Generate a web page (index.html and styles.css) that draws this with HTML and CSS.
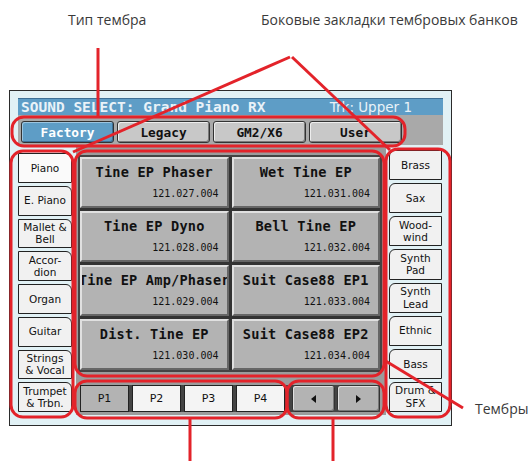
FILE: index.html
```html
<!DOCTYPE html>
<html>
<head>
    <meta charset="utf-8">
    <link rel="stylesheet" href="styles.css">
</head>
<body>
    <div class="page">
        <div class="note note-type">Тип тембра</div>
        <div class="note note-tabs">Боковые закладки тембровых банков</div>
        <div class="note note-sounds">Тембры</div>

        <div class="screen">
            <div class="titlebar">
                <span class="title">SOUND SELECT: Grand Piano RX</span>
                <span class="track">Trk: Upper 1</span>
            </div>
            <div class="banks">
                <div class="bank active">Factory</div>
                <div class="bank">Legacy</div>
                <div class="bank">GM2/X6</div>
                <div class="bank">User</div>
            </div>
            <div class="body">
                <div class="side side-left">
                    <div class="side-tab active">Piano</div>
                    <div class="side-tab">E. Piano</div>
                    <div class="side-tab">Mallet &amp;<br>Bell</div>
                    <div class="side-tab">Accor-<br>dion</div>
                    <div class="side-tab">Organ</div>
                    <div class="side-tab">Guitar</div>
                    <div class="side-tab">Strings<br>&amp; Vocal</div>
                    <div class="side-tab">Trumpet<br>&amp; Trbn.</div>
                </div>
                <div class="center">
                    <div class="grid">
                        <div class="cell"><div class="name">Tine EP Phaser</div><div class="num">121.027.004</div></div>
                        <div class="cell"><div class="name">Wet Tine EP</div><div class="num">121.031.004</div></div>
                        <div class="cell"><div class="name">Tine EP Dyno</div><div class="num">121.028.004</div></div>
                        <div class="cell"><div class="name">Bell Tine EP</div><div class="num">121.032.004</div></div>
                        <div class="cell"><div class="name">Tine EP Amp/Phaser</div><div class="num">121.029.004</div></div>
                        <div class="cell"><div class="name">Suit Case88 EP1</div><div class="num">121.033.004</div></div>
                        <div class="cell"><div class="name">Dist. Tine EP</div><div class="num">121.030.004</div></div>
                        <div class="cell"><div class="name">Suit Case88 EP2</div><div class="num">121.034.004</div></div>
                    </div>
                    <div class="pager">
                        <div class="page-btn active">P1</div>
                        <div class="page-btn">P2</div>
                        <div class="page-btn">P3</div>
                        <div class="page-btn">P4</div>
                        <div class="arrows">
                            <div class="arrow">
                                <svg width="5" height="8" viewBox="0 0 5 8"><path d="M5 0 L0 4 L5 8 Z" fill="#111"/></svg>
                            </div>
                            <div class="arrow">
                                <svg width="5" height="8" viewBox="0 0 5 8"><path d="M0 0 L5 4 L0 8 Z" fill="#111"/></svg>
                            </div>
                        </div>
                    </div>
                </div>
                <div class="side side-right">
                    <div class="side-tab">Brass</div>
                    <div class="side-tab">Sax</div>
                    <div class="side-tab">Wood-<br>wind</div>
                    <div class="side-tab">Synth<br>Pad</div>
                    <div class="side-tab">Synth<br>Lead</div>
                    <div class="side-tab">Ethnic</div>
                    <div class="side-tab">Bass</div>
                    <div class="side-tab">Drum &amp;<br>SFX</div>
                </div>
            </div>
        </div>

        <!-- red callouts over the screenshot -->
        <svg class="marks" width="529" height="463" viewBox="0 0 529 463">
            <g fill="none" stroke="#e3232a" stroke-width="3">
                <rect x="12" y="117" width="393" height="29" rx="12"/>
                <rect x="11" y="151" width="62" height="266" rx="12"/>
                <rect x="75" y="151" width="309" height="225" rx="12"/>
                <rect x="75" y="381" width="212" height="37" rx="12"/>
                <rect x="287" y="381" width="97" height="37" rx="12"/>
                <rect x="386" y="149" width="64" height="268" rx="12"/>
                <line x1="98" y1="48" x2="98" y2="117"/>
                <line x1="290" y1="57" x2="73" y2="152"/>
                <line x1="292" y1="57" x2="390" y2="150"/>
                <line x1="190" y1="418" x2="190" y2="461"/>
                <line x1="333" y1="418" x2="333" y2="461"/>
                <line x1="384" y1="360" x2="463" y2="408"/>
            </g>
        </svg>
    </div>
</body>
</html>
```

FILE: styles.css
```css
* {
    box-sizing: border-box;
}
body {
    margin: 0;
    background: #fff;
    font-family: "DejaVu Sans", sans-serif;
}
.page {
    position: relative;
    width: 529px;
    height: 463px;
    overflow: hidden;
    padding: 90px 0 0 9px;
}
.note {
    position: absolute;
    font-family: "Open Sans", sans-serif;
    font-size: 14px;
    line-height: 16px;
    color: #3a3a3a;
    white-space: nowrap;
}
.note-type {
    left: 68px;
    top: 12px;
}
.note-tabs {
    left: 261px;
    top: 12px;
}
.note-sounds {
    left: 475px;
    top: 401px;
}

.screen {
    width: 443px;
    height: 336px;
    border: 1px solid #2b2b2b;
    background: #e1f1f5;
    padding: 7px 8px 10px 8px;
    display: flex;
    flex-direction: column;
}
.titlebar {
    height: 17px;
    background: #5e9dc6;
    border-top: 1px solid #3d6f95;
    display: flex;
    align-items: center;
    color: #e9f2f8;
    padding-left: 3px;
}
.title {
    font-family: "DejaVu Sans Mono", monospace;
    font-weight: bold;
    font-size: 14.5px;
    line-height: 16px;
}
.track {
    margin-left: auto;
    margin-right: 31px;
    font-size: 13.5px;
    line-height: 16px;
}
.banks {
    height: 30px;
    background: #a9a9a9;
    display: flex;
    gap: 3px;
    padding: 6px 3px 2px;
}
.bank {
    width: 93px;
    border: 1px solid #333;
    border-radius: 3px;
    background: #c8c8c8;
    box-shadow: inset 1px 1px 0 #ededed, inset -1px -1px 0 #7a7a7a;
    font: bold 12.8px "DejaVu Sans Mono", monospace;
    color: #111;
    display: flex;
    align-items: center;
    justify-content: center;
}
.bank.active {
    background: #5e9dc6;
    color: #fff;
    box-shadow: inset 1px 1px 0 #9cc5e0, inset -1px -1px 0 #3d6f95;
}

.body {
    flex: 1;
    display: flex;
    background: #9c9c9c;
}
.side {
    display: flex;
    flex-direction: column;
    gap: 3px;
    background: #e1f1f5;
}
.side-left {
    width: 58px;
    padding: 8px 4px 3px 0;
}
.side-right {
    width: 57px;
    padding: 5px 1px 3px 3px;
}
.side-tab {
    flex: 1;
    background: #f1f1f1;
    border: 1px solid #222;
    display: flex;
    align-items: center;
    justify-content: center;
    text-align: center;
    font-size: 10.5px;
    line-height: 12.5px;
    color: #111;
}
.side-left .side-tab {
    border-radius: 0 6px 0 0;
}
.side-right .side-tab {
    border-radius: 6px 0 0 0;
}
.side-tab.active {
    background: #fafafa;
}

.center {
    width: 310px;
    padding: 12px 6px 0 4px;
    display: flex;
    flex-direction: column;
}
.grid {
    height: 213px;
    display: grid;
    grid-template-columns: 1fr 1fr;
    grid-template-rows: repeat(4, 1fr);
    gap: 3px;
    background: #333;
    outline: 2px solid #444;
}
.cell {
    background: #b3b3b3;
    border: 2px solid;
    border-color: #e0e0e0 #666 #666 #e0e0e0;
    display: flex;
    flex-direction: column;
    overflow: hidden;
}
.name {
    display: flex;
    justify-content: center;
    white-space: nowrap;
    font: bold 13.6px/16px "DejaVu Sans Mono", monospace;
    letter-spacing: 0.2px;
    color: #111;
    margin-top: 5px;
}
.num {
    text-align: right;
    padding-right: 8px;
    font: 10px/12px "DejaVu Sans Mono", monospace;
    color: #111;
    margin-top: 8px;
}

.pager {
    display: flex;
    gap: 3px;
    margin-top: 15px;
    height: 27px;
    background: #444;
}
.page-btn {
    width: 49px;
    border: 1px solid #222;
    background: #f4f4f4;
    font-size: 11px;
    color: #111;
    display: flex;
    align-items: center;
    justify-content: center;
}
.page-btn.active {
    background: #b3b3b3;
}
.arrows {
    flex: 1;
    display: flex;
    gap: 2px;
    margin-left: 4px;
}
.arrow {
    flex: 1;
    background: #b3b3b3;
    border: 1px solid #333;
    border-radius: 3px;
    box-shadow: inset 1px 1px 0 #e0e0e0, inset -1px -1px 0 #777;
    display: flex;
    align-items: center;
    justify-content: center;
}

.marks {
    position: absolute;
    left: 0;
    top: 0;
    pointer-events: none;
}
```
